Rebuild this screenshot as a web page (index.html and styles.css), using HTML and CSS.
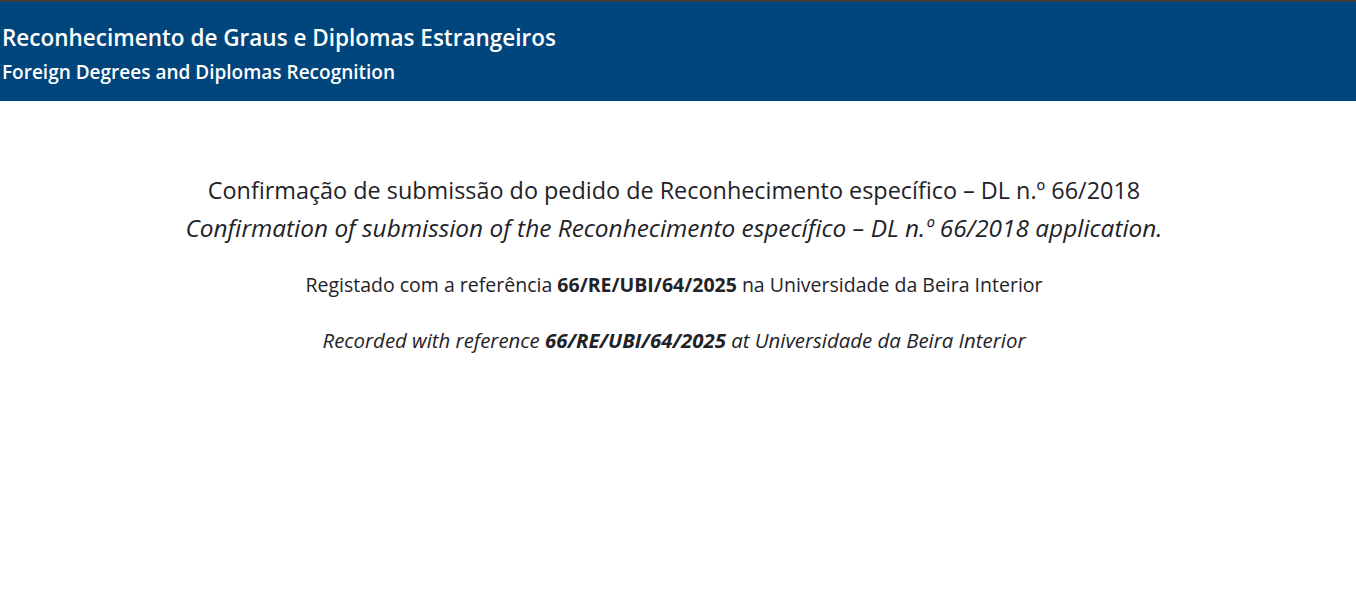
FILE: index.html
```html
<!DOCTYPE html>
<html lang="pt">
<head>
<meta charset="utf-8">
<title>Reconhecimento de Graus e Diplomas Estrangeiros</title>
<link rel="stylesheet" href="styles.css">
</head>
<body>
<div class="topline"></div>
<header class="banner">
  <div class="banner-title">Reconhecimento de Graus e Diplomas Estrangeiros</div>
  <div class="banner-sub">Foreign Degrees and Diplomas Recognition</div>
</header>
<main class="content">
  <h1 class="heading">
    <span class="heading-pt">Confirmação de submissão do pedido de Reconhecimento específico – DL n.º 66/2018</span>
    <span class="heading-en">Confirmation of submission of the Reconhecimento específico – DL n.º 66/2018 application.</span>
  </h1>
  <p class="ref">Registado com a referência <strong>66/RE/UBI/64/2025</strong> na Universidade da Beira Interior</p>
  <p class="ref ref-en">Recorded with reference <strong>66/RE/UBI/64/2025</strong> at Universidade da Beira Interior</p>
</main>
</body>
</html>
```

FILE: styles.css
```css
html, body {
  margin: 0;
  padding: 0;
  background: #ffffff;
}
body {
  font-family: "Open Sans", "Noto Sans", sans-serif;
  color: #1f2328;
}
.topline {
  height: 2px;
  background: #3d3d3d;
}
.banner {
  background: #00457c;
  color: #ffffff;
  height: 99px;
  box-sizing: border-box;
  padding: 21px 2px 0;
}
.banner-title {
  font-size: 22.5px;
  font-weight: 600;
  line-height: 30px;
}
.banner-sub {
  font-size: 19px;
  font-weight: 600;
  line-height: 26px;
  margin-top: 6px;
}
.content {
  padding: 71px 8px 0 0;
  text-align: center;
}
.heading {
  margin: 0;
  font-weight: 500;
  font-size: 23.4px;
  line-height: 37px;
  display: flex;
  flex-direction: column;
}
.heading-en {
  font-style: italic;
  font-size: 24.4px;
}
.ref {
  margin: 24px 0 0;
  font-size: 19.5px;
  line-height: 30px;
  font-weight: 500;
}
.ref strong {
  font-weight: 700;
}
.ref-en {
  font-style: italic;
  font-size: 20.4px;
  margin-top: 25px;
}
```
